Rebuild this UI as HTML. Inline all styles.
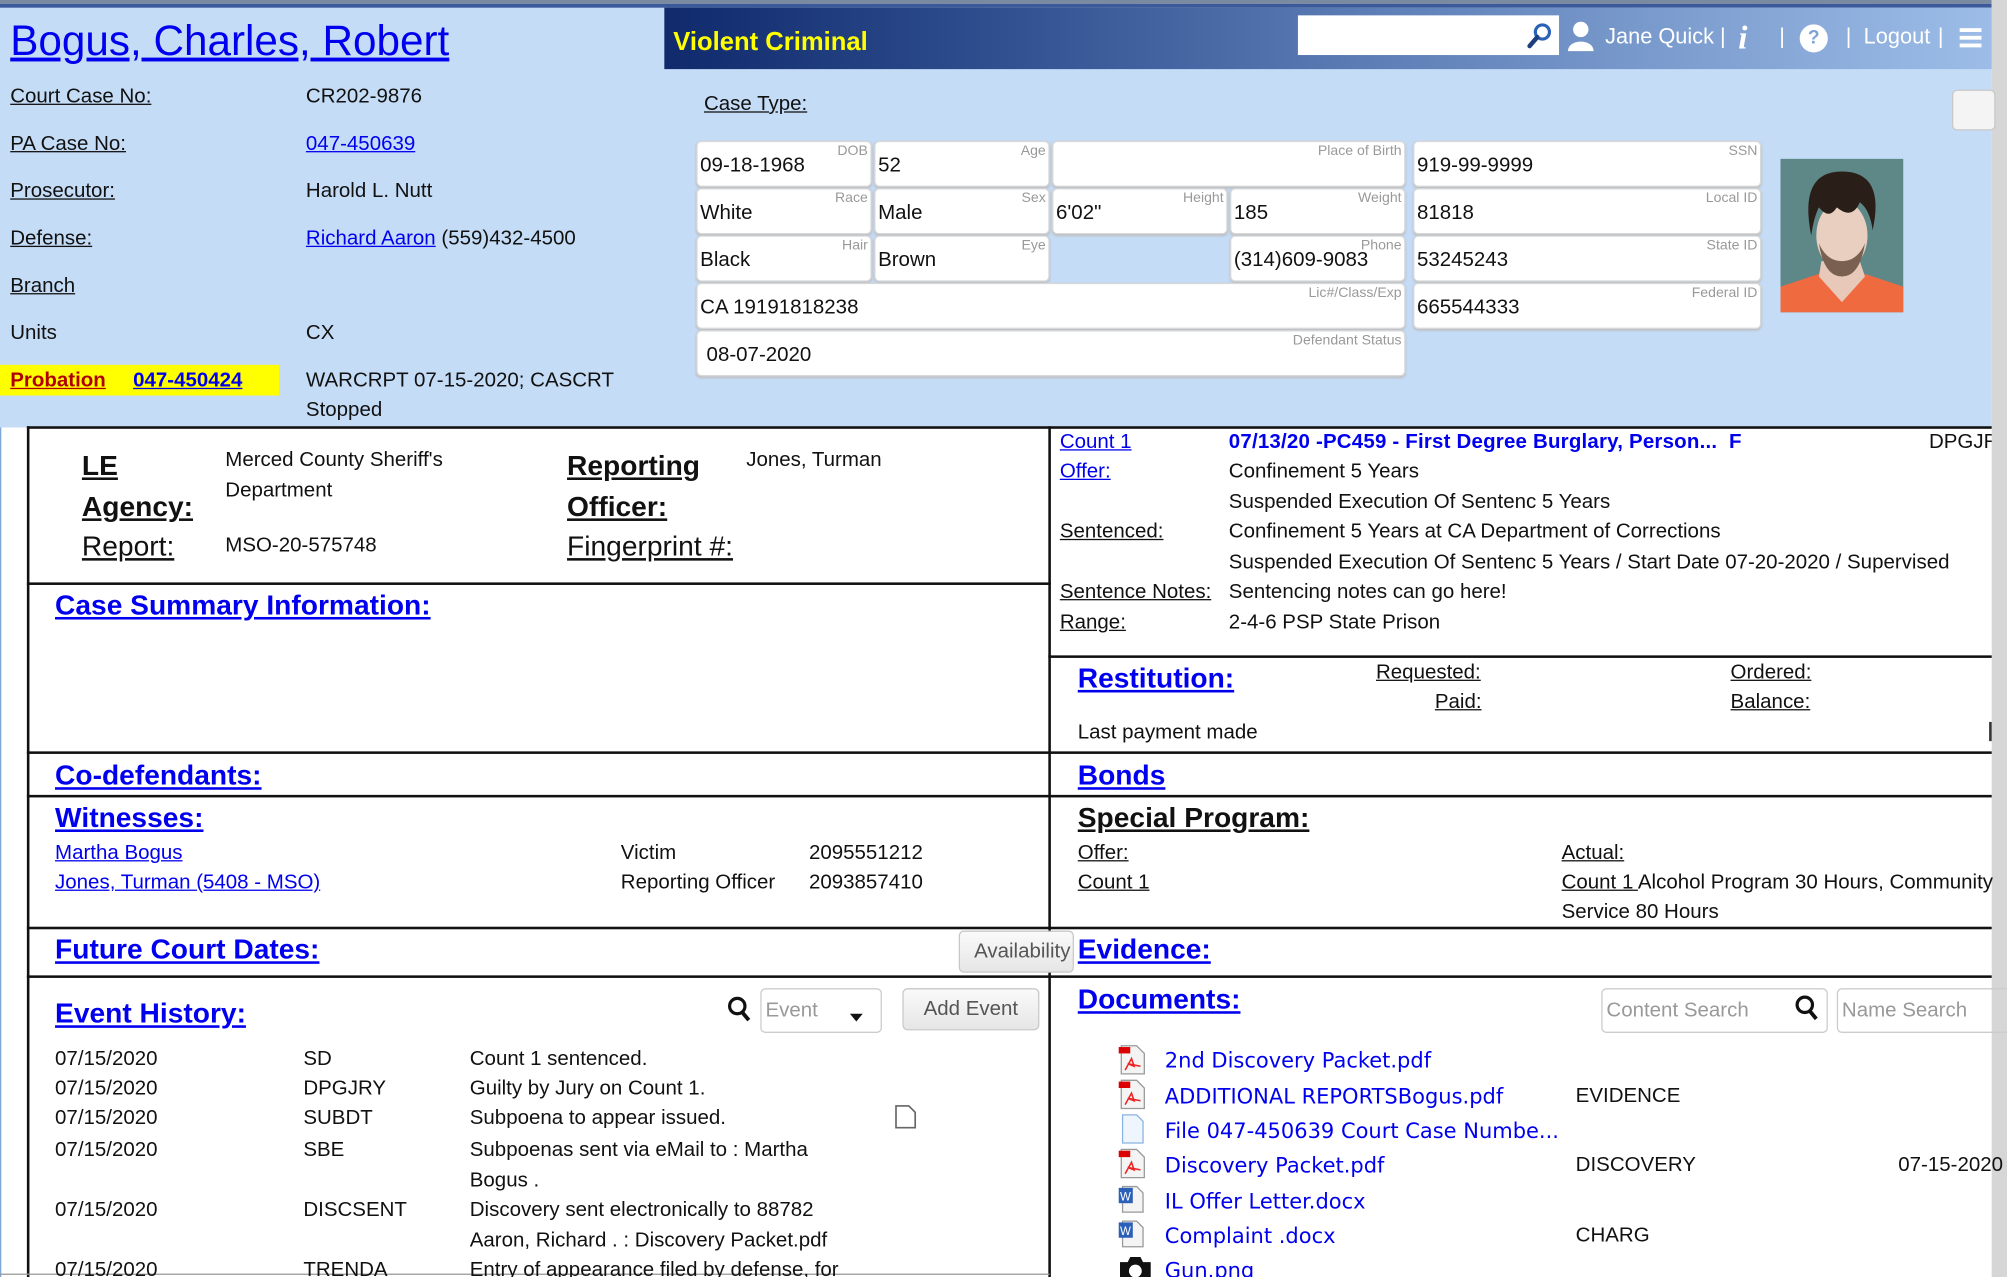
<!DOCTYPE html>
<html><head><meta charset="utf-8">
<style>
html,body{margin:0;padding:0;width:2007px;height:1277px;overflow:hidden;background:#fff}
#w{position:absolute;left:0;top:0;width:1568px;height:998px;transform:scale(1.28);transform-origin:0 0;font-family:"Liberation Sans",Arial,sans-serif;font-size:16px;color:#111;overflow:hidden;background:#fff}
.a{position:absolute;white-space:nowrap;line-height:20px}
.u{text-decoration:underline}
.l{color:#0000ee;text-decoration:underline}
.h{font-size:22px;font-weight:bold;color:#0000ee;text-decoration:underline;line-height:26px}
.hb{font-size:22px;font-weight:bold;text-decoration:underline;line-height:26px}
.card{position:absolute;background:#fff;border:1px solid #d8d8d8;border-radius:4px;box-shadow:0 1px 2px #bbb;box-sizing:border-box}
.card .lb{position:absolute;right:2px;top:1px;font-size:11px;color:#999;line-height:13px}
.card .v{position:absolute;left:2px;top:9px;font-size:16px;line-height:20px}
.hl{position:absolute;height:2px;background:#111}
.vl{position:absolute;width:2px;background:#111}
.btn{position:absolute;border:1px solid #c8c8c8;border-radius:4px;background:linear-gradient(#fafafa,#e6e6e6);color:#555;box-sizing:border-box;text-align:center}
.doc{font-family:"DejaVu Sans",Verdana,sans-serif;font-size:16.4px;color:#0000ee}
</style></head><body><div id="w">
<div style="position:absolute;left:0;top:0;width:1556px;height:334px;background:#c5dcf7"></div>
<div style="position:absolute;left:0;top:0;width:1556px;height:3px;background:#7a8aa0"></div>
<div style="position:absolute;left:0;top:3px;width:1556px;height:3px;background:#3c5a9a"></div>
<div style="position:absolute;left:1556px;top:0;width:12px;height:998px;background:#d6d6d6"></div>
<div style="position:absolute;left:0;top:334px;width:1px;height:664px;background:#7ea6d8"></div>
<div style="position:absolute;left:519px;top:6px;width:1037px;height:48px;background:linear-gradient(90deg,#102a6c 0%,#2f4f8f 25%,#5f80b8 55%,#9dbde8 100%)"></div>
<div class="a" style="left:526px;top:21px;font-size:20px;line-height:24px;font-weight:bold;color:#ffff00">Violent Criminal</div>
<div style="position:absolute;left:1014px;top:12px;width:204px;height:31px;background:#fff"></div>
<svg style="position:absolute;left:1193px;top:17px" width="20" height="22" viewBox="0 0 20 22"><circle cx="12" cy="8" r="5.5" fill="none" stroke="#2a62b8" stroke-width="2.5"/><line x1="8" y1="12" x2="2" y2="19" stroke="#1d3f80" stroke-width="3.5" stroke-linecap="round"/></svg>
<svg style="position:absolute;left:1224px;top:16px" width="22" height="24" viewBox="0 0 22 24"><circle cx="11" cy="7" r="6" fill="#fff"/><path d="M1 24 C1 14 21 14 21 24Z" fill="#fff"/></svg>
<div class="a" style="left:1254px;top:19px;font-size:17px;color:#fff">Jane Quick |</div>
<div class="a" style="left:1358px;top:16px;font-size:26px;line-height:28px;font-style:italic;font-weight:bold;color:#fff;font-family:'Liberation Serif',serif">i</div>
<div class="a" style="left:1390px;top:19px;font-size:17px;color:#fff">|</div>
<div style="position:absolute;left:1406px;top:19px;width:22px;height:22px;border-radius:50%;background:#fff;color:#7fa3d8;font-weight:bold;text-align:center;line-height:22px;font-size:15px">?</div>
<div class="a" style="left:1442px;top:19px;font-size:17px;color:#fff">|</div>
<div class="a" style="left:1456px;top:19px;font-size:17px;color:#fff">Logout</div>
<div class="a" style="left:1514px;top:19px;font-size:17px;color:#fff">|</div>
<div style="position:absolute;left:1531px;top:22px;width:17px;height:3px;background:#fff;box-shadow:0 6px 0 #fff,0 12px 0 #fff"></div>

<div class="a l" style="left:8px;top:13px;font-size:33px;line-height:38px">Bogus, Charles, Robert</div>
<div class="a u" style="left:8px;top:66px">Court Case No:</div><div class="a" style="left:239px;top:66px">CR202-9876</div>
<div class="a u" style="left:8px;top:103px">PA Case No:</div><div class="a l" style="left:239px;top:103px">047-450639</div>
<div class="a u" style="left:8px;top:140px">Prosecutor:</div><div class="a" style="left:239px;top:140px">Harold L. Nutt</div>
<div class="a u" style="left:8px;top:177px">Defense:</div><div class="a" style="left:239px;top:177px"><span class="l">Richard Aaron</span> (559)432-4500</div>
<div class="a u" style="left:8px;top:214px">Branch</div>
<div class="a" style="left:8px;top:251px">Units</div><div class="a" style="left:239px;top:251px">CX</div>
<div style="position:absolute;left:0;top:285px;width:218px;height:24px;background:#ffff00"></div>
<div class="a u" style="left:8px;top:288px;color:#b00000;font-weight:bold">Probation</div>
<div class="a l" style="left:104px;top:288px;font-weight:bold">047-450424</div>
<div class="a" style="left:239px;top:288px">WARCRPT 07-15-2020; CASCRT</div>
<div class="a" style="left:239px;top:311px">Stopped</div>
<div class="a u" style="left:550px;top:72px">Case Type:</div>
<div class="btn" style="left:1525px;top:70px;width:34px;height:32px;background:#f4f4f4"></div>

<div class="card" style="left:544px;top:110px;width:137px;height:36px"><span class="lb">DOB</span><span class="v">09-18-1968</span></div>
<div class="card" style="left:683px;top:110px;width:137px;height:36px"><span class="lb">Age</span><span class="v">52</span></div>
<div class="card" style="left:822px;top:110px;width:276px;height:36px"><span class="lb">Place of Birth</span></div>
<div class="card" style="left:1104px;top:110px;width:272px;height:36px"><span class="lb">SSN</span><span class="v">919-99-9999</span></div>
<div class="card" style="left:544px;top:147px;width:137px;height:36px"><span class="lb">Race</span><span class="v">White</span></div>
<div class="card" style="left:683px;top:147px;width:137px;height:36px"><span class="lb">Sex</span><span class="v">Male</span></div>
<div class="card" style="left:822px;top:147px;width:137px;height:36px"><span class="lb">Height</span><span class="v">6'02"</span></div>
<div class="card" style="left:961px;top:147px;width:137px;height:36px"><span class="lb">Weight</span><span class="v">185</span></div>
<div class="card" style="left:1104px;top:147px;width:272px;height:36px"><span class="lb">Local ID</span><span class="v">81818</span></div>
<div class="card" style="left:544px;top:184px;width:137px;height:36px"><span class="lb">Hair</span><span class="v">Black</span></div>
<div class="card" style="left:683px;top:184px;width:137px;height:36px"><span class="lb">Eye</span><span class="v">Brown</span></div>
<div class="card" style="left:961px;top:184px;width:137px;height:36px"><span class="lb">Phone</span><span class="v">(314)609-9083</span></div>
<div class="card" style="left:1104px;top:184px;width:272px;height:36px"><span class="lb">State ID</span><span class="v">53245243</span></div>
<div class="card" style="left:544px;top:221px;width:554px;height:36px"><span class="lb">Lic#/Class/Exp</span><span class="v">CA 19191818238</span></div>
<div class="card" style="left:1104px;top:221px;width:272px;height:36px"><span class="lb">Federal ID</span><span class="v">665544333</span></div>
<div class="card" style="left:544px;top:258px;width:554px;height:36px"><span class="lb">Defendant Status</span><span class="v" style="left:7px">08-07-2020</span></div>

<svg style="position:absolute;left:1391px;top:124px" width="96" height="120" viewBox="0 0 96 120">
<rect width="96" height="120" fill="#5e8787"/>
<path d="M0 100 L30 90 L48 110 L66 90 L96 100 L96 120 L0 120Z" fill="#f06a40"/>
<path d="M32 80 L30 92 L48 112 L66 92 L62 80Z" fill="#e8c8b8"/>
<ellipse cx="48" cy="60" rx="20" ry="27" fill="#e8cfc0"/>
<path d="M30 66 Q34 92 48 92 Q62 92 66 66 Q60 80 48 80 Q36 80 30 66Z" fill="#7a6050"/>
<path d="M24 60 Q14 10 48 10 Q82 10 72 56 Q70 40 62 34 Q56 48 44 38 Q38 48 30 38 Q26 46 24 60Z" fill="#2a1e18"/>
</svg>

<div class="hl" style="left:21px;top:333px;width:1535px"></div>
<div class="vl" style="left:21px;top:333px;height:665px"></div>
<div class="vl" style="left:819px;top:333px;height:665px"></div>
<div class="hl" style="left:21px;top:455px;width:800px"></div>
<div class="hl" style="left:21px;top:587px;width:1535px"></div>
<div class="hl" style="left:21px;top:621px;width:1535px"></div>
<div class="hl" style="left:21px;top:724px;width:1535px"></div>
<div class="hl" style="left:21px;top:762px;width:1535px"></div>
<div class="hl" style="left:819px;top:512px;width:737px"></div>
<div style="position:absolute;left:0;top:995px;width:820px;height:1px;background:#999"></div>

<div class="a hb" style="left:64px;top:351px">LE</div>
<div class="a hb" style="left:64px;top:383px">Agency:</div>
<div class="a u" style="left:64px;top:414px;font-size:22px;line-height:26px">Report:</div>
<div class="a" style="left:176px;top:350px">Merced County Sheriff's</div>
<div class="a" style="left:176px;top:374px">Department</div>
<div class="a" style="left:176px;top:417px">MSO-20-575748</div>
<div class="a hb" style="left:443px;top:351px">Reporting</div>
<div class="a hb" style="left:443px;top:383px">Officer:</div>
<div class="a u" style="left:443px;top:414px;font-size:22px;line-height:26px">Fingerprint #:</div>
<div class="a" style="left:583px;top:350px">Jones, Turman</div>
<div class="a h" style="left:43px;top:460px">Case Summary Information:</div>
<div class="a h" style="left:43px;top:593px">Co-defendants:</div>
<div class="a h" style="left:43px;top:626px">Witnesses:</div>
<div class="a l" style="left:43px;top:657px">Martha Bogus</div>
<div class="a l" style="left:43px;top:680px">Jones, Turman (5408 - MSO)</div>
<div class="a" style="left:485px;top:657px">Victim</div><div class="a" style="left:632px;top:657px">2095551212</div>
<div class="a" style="left:485px;top:680px">Reporting Officer</div><div class="a" style="left:632px;top:680px">2093857410</div>
<div class="a h" style="left:43px;top:729px">Future Court Dates:</div>
<div class="a h" style="left:43px;top:779px">Event History:</div>
<svg style="position:absolute;left:568px;top:778px" width="20" height="22" viewBox="0 0 20 22"><circle cx="8" cy="8" r="6" fill="none" stroke="#111" stroke-width="2.5"/><line x1="12" y1="13" x2="17" y2="19" stroke="#111" stroke-width="3"/></svg>
<div style="position:absolute;left:594px;top:772px;width:95px;height:35px;border:1px solid #ccc;border-radius:4px;box-sizing:border-box"></div>
<div class="a" style="left:598px;top:780px;color:#999">Event</div>
<div style="position:absolute;left:664px;top:792px;border-left:5px solid transparent;border-right:5px solid transparent;border-top:6px solid #111"></div>
<div class="btn" style="left:705px;top:772px;width:107px;height:33px;line-height:31px">Add Event</div>
<div class="a" style="left:43px;top:818px">07/15/2020</div><div class="a" style="left:237px;top:818px">SD</div><div class="a" style="left:367px;top:818px">Count 1 sentenced.</div>
<div class="a" style="left:43px;top:841px">07/15/2020</div><div class="a" style="left:237px;top:841px">DPGJRY</div><div class="a" style="left:367px;top:841px">Guilty by Jury on Count 1.</div>
<div class="a" style="left:43px;top:864px">07/15/2020</div><div class="a" style="left:237px;top:864px">SUBDT</div><div class="a" style="left:367px;top:864px">Subpoena to appear issued.</div>
<svg style="position:absolute;left:699px;top:863px" width="18" height="19" viewBox="0 0 18 19"><path d="M1 1 H11 L16 6 V18 H1Z" fill="#fff" stroke="#666" stroke-width="1.3"/></svg>
<div class="a" style="left:43px;top:889px">07/15/2020</div><div class="a" style="left:237px;top:889px">SBE</div><div class="a" style="left:367px;top:889px">Subpoenas sent via eMail to : Martha</div>
<div class="a" style="left:367px;top:913px">Bogus .</div>
<div class="a" style="left:43px;top:936px">07/15/2020</div><div class="a" style="left:237px;top:936px">DISCSENT</div><div class="a" style="left:367px;top:936px">Discovery sent electronically to 88782</div>
<div class="a" style="left:367px;top:960px">Aaron, Richard . : Discovery Packet.pdf</div>
<div class="a" style="left:43px;top:983px">07/15/2020</div><div class="a" style="left:237px;top:983px">TRENDA</div><div class="a" style="left:367px;top:983px">Entry of appearance filed by defense, for</div>

<div class="a l" style="left:828px;top:336px">Count 1</div>
<div class="a" style="left:960px;top:336px;color:#0000ee;font-weight:bold;letter-spacing:0.15px">07/13/20 -PC459 - First Degree Burglary, Person...&nbsp; F</div>
<div class="a" style="left:1507px;top:336px;width:49px;overflow:hidden">DPGJRY</div>
<div class="a l" style="left:828px;top:359px">Offer:</div><div class="a" style="left:960px;top:359px">Confinement 5 Years</div>
<div class="a" style="left:960px;top:383px">Suspended Execution Of Sentenc 5 Years</div>
<div class="a u" style="left:828px;top:406px">Sentenced:</div><div class="a" style="left:960px;top:406px">Confinement 5 Years at CA Department of Corrections</div>
<div class="a" style="left:960px;top:430px">Suspended Execution Of Sentenc 5 Years / Start Date 07-20-2020 / Supervised</div>
<div class="a u" style="left:828px;top:453px">Sentence Notes:</div><div class="a" style="left:960px;top:453px">Sentencing notes can go here!</div>
<div class="a u" style="left:828px;top:477px">Range:</div><div class="a" style="left:960px;top:477px">2-4-6 PSP State Prison</div>
<div class="a h" style="left:842px;top:517px">Restitution:</div>
<div class="a u" style="left:1075px;top:516px">Requested:</div>
<div class="a u" style="left:1121px;top:539px">Paid:</div>
<div class="a u" style="left:1352px;top:516px">Ordered:</div>
<div class="a u" style="left:1352px;top:539px">Balance:</div>
<div class="a" style="left:842px;top:563px">Last payment made</div>
<div style="position:absolute;left:1554px;top:564px;width:2px;height:15px;background:#333"></div>
<div class="a h" style="left:842px;top:593px">Bonds</div>
<div class="a hb" style="left:842px;top:626px">Special Program:</div>
<div class="a u" style="left:842px;top:657px">Offer:</div>
<div class="a u" style="left:842px;top:680px">Count 1</div>
<div class="a u" style="left:1220px;top:657px">Actual:</div>
<div class="a" style="left:1220px;top:680px"><span class="u">Count 1 </span>Alcohol Program 30 Hours, Community</div>
<div class="a" style="left:1220px;top:703px">Service 80 Hours</div>
<div class="btn" style="left:749px;top:727px;width:90px;height:33px;line-height:31px;text-align:left;padding-left:11px;overflow:hidden;z-index:2">Availability</div>
<div class="a h" style="left:842px;top:729px">Evidence:</div>
<div class="a h" style="left:842px;top:768px">Documents:</div>
<div style="position:absolute;left:1251px;top:772px;width:177px;height:35px;border:1px solid #ccc;border-radius:4px;box-sizing:border-box"></div>
<div class="a" style="left:1255px;top:780px;color:#999">Content Search</div>
<svg style="position:absolute;left:1402px;top:777px" width="20" height="22" viewBox="0 0 20 22"><circle cx="8" cy="8" r="6" fill="none" stroke="#111" stroke-width="2.5"/><line x1="12" y1="13" x2="17" y2="19" stroke="#111" stroke-width="3"/></svg>
<div style="position:absolute;left:1435px;top:772px;width:140px;height:35px;border:1px solid #ccc;border-radius:4px;box-sizing:border-box"></div>
<div class="a" style="left:1439px;top:780px;color:#999">Name Search</div>

<svg style="position:absolute;left:873px;top:816px" width="24" height="24" viewBox="0 0 24 24"><path d="M3 1 H15 L21 7 V23 H3Z" fill="#f4f4f4" stroke="#999"/><rect x="1" y="2" width="9" height="5" fill="#d00"/><path d="M6 20 L11 11 L13 17 L8 15 L18 17" fill="none" stroke="#e22" stroke-width="1.2"/></svg>
<div class="a doc" style="left:910px;top:819px">2nd Discovery Packet.pdf</div>
<svg style="position:absolute;left:873px;top:843px" width="24" height="24" viewBox="0 0 24 24"><path d="M3 1 H15 L21 7 V23 H3Z" fill="#f4f4f4" stroke="#999"/><rect x="1" y="2" width="9" height="5" fill="#d00"/><path d="M6 20 L11 11 L13 17 L8 15 L18 17" fill="none" stroke="#e22" stroke-width="1.2"/></svg>
<div class="a doc" style="left:910px;top:847px">ADDITIONAL REPORTSBogus.pdf</div>
<div class="a" style="left:1231px;top:847px">EVIDENCE</div>
<svg style="position:absolute;left:873px;top:870px" width="24" height="24" viewBox="0 0 24 24"><path d="M4 1 H15 L20 6 V23 H4Z" fill="#eef5fd" stroke="#8ab4e0"/></svg>
<div class="a doc" style="left:910px;top:874px">File 047-450639 Court Case Numbe...</div>
<svg style="position:absolute;left:873px;top:897px" width="24" height="24" viewBox="0 0 24 24"><path d="M3 1 H15 L21 7 V23 H3Z" fill="#f4f4f4" stroke="#999"/><rect x="1" y="2" width="9" height="5" fill="#d00"/><path d="M6 20 L11 11 L13 17 L8 15 L18 17" fill="none" stroke="#e22" stroke-width="1.2"/></svg>
<div class="a doc" style="left:910px;top:901px">Discovery Packet.pdf</div>
<div class="a" style="left:1231px;top:901px">DISCOVERY</div>
<div class="a" style="left:1483px;top:901px">07-15-2020</div>
<svg style="position:absolute;left:873px;top:925px" width="24" height="24" viewBox="0 0 24 24"><path d="M4 2 H15 L20 7 V22 H4Z" fill="#f4f4f4" stroke="#999"/><rect x="1" y="3" width="11" height="12" fill="#2b5fb8"/><text x="2" y="13" font-size="9" fill="#fff" font-family="Liberation Sans">W</text></svg>
<div class="a doc" style="left:910px;top:929px">IL Offer Letter.docx</div>
<svg style="position:absolute;left:873px;top:952px" width="24" height="24" viewBox="0 0 24 24"><path d="M4 2 H15 L20 7 V22 H4Z" fill="#f4f4f4" stroke="#999"/><rect x="1" y="3" width="11" height="12" fill="#2b5fb8"/><text x="2" y="13" font-size="9" fill="#fff" font-family="Liberation Sans">W</text></svg>
<div class="a doc" style="left:910px;top:956px">Complaint .docx</div>
<div class="a" style="left:1231px;top:956px">CHARG</div>
<svg style="position:absolute;left:873px;top:980px" width="28" height="22" viewBox="0 0 28 22"><path d="M2 6 H8 L10 2 H18 L20 6 H26 V22 H2Z" fill="#111"/><circle cx="14" cy="13" r="5" fill="#fff"/></svg>
<div class="a doc" style="left:910px;top:983px">Gun.png</div>
</div></body></html>
